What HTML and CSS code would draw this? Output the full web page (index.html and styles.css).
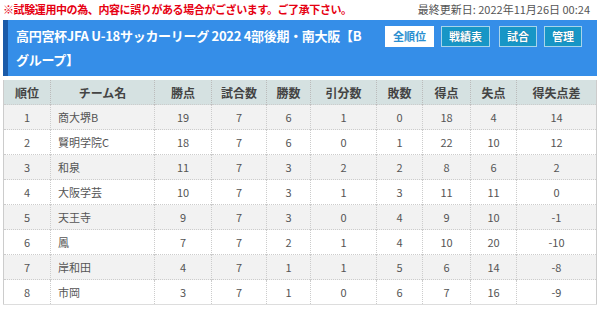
FILE: index.html
```html
<!DOCTYPE html>
<html lang="ja">
<head>
<meta charset="utf-8">
<link rel="stylesheet" href="styles.css">
</head>
<body>
<div class="topline">
  <span class="notice">※試験運用中の為、内容に誤りがある場合がございます。ご了承下さい。</span>
  <span class="updated">最終更新日: 2022年11月26日 00:24</span>
</div>
<div class="banner">
  <h1 class="title">高円宮杯JFA U-18サッカーリーグ 2022 4部後期・南大阪【Bグループ】</h1>
  <div class="btns">
    <span class="btn active">全順位</span>
    <span class="btn">戦績表</span>
    <span class="btn">試合</span>
    <span class="btn">管理</span>
  </div>
</div>
<table class="standings">
  <colgroup>
    <col class="c-rank"><col class="c-team"><col class="c-pts"><col class="c-gp"><col class="c-w"><col class="c-d"><col class="c-l"><col class="c-gf"><col class="c-ga"><col class="c-gd">
  </colgroup>
  <thead>
    <tr><th>順位</th><th>チーム名</th><th>勝点</th><th>試合数</th><th>勝数</th><th>引分数</th><th>敗数</th><th>得点</th><th>失点</th><th>得失点差</th></tr>
  </thead>
  <tbody>
    <tr><td>1</td><td class="team">商大堺B</td><td>19</td><td>7</td><td>6</td><td>1</td><td>0</td><td>18</td><td>4</td><td>14</td></tr>
    <tr><td>2</td><td class="team">賢明学院C</td><td>18</td><td>7</td><td>6</td><td>0</td><td>1</td><td>22</td><td>10</td><td>12</td></tr>
    <tr><td>3</td><td class="team">和泉</td><td>11</td><td>7</td><td>3</td><td>2</td><td>2</td><td>8</td><td>6</td><td>2</td></tr>
    <tr><td>4</td><td class="team">大阪学芸</td><td>10</td><td>7</td><td>3</td><td>1</td><td>3</td><td>11</td><td>11</td><td>0</td></tr>
    <tr><td>5</td><td class="team">天王寺</td><td>9</td><td>7</td><td>3</td><td>0</td><td>4</td><td>9</td><td>10</td><td>-1</td></tr>
    <tr><td>6</td><td class="team">鳳</td><td>7</td><td>7</td><td>2</td><td>1</td><td>4</td><td>10</td><td>20</td><td>-10</td></tr>
    <tr><td>7</td><td class="team">岸和田</td><td>4</td><td>7</td><td>1</td><td>1</td><td>5</td><td>6</td><td>14</td><td>-8</td></tr>
    <tr><td>8</td><td class="team">市岡</td><td>3</td><td>7</td><td>1</td><td>0</td><td>6</td><td>7</td><td>16</td><td>-9</td></tr>
  </tbody>
</table>
</body>
</html>
```
FILE: styles.css
```css
html, body { margin: 0; padding: 0; background: #fff; }
body {
  padding: 0 3px;
  font-family: "Noto Sans CJK JP", "Noto Sans", sans-serif;
  color: #555;
}
.topline {
  display: flex;
  justify-content: space-between;
  align-items: center;
  height: 18px;
  font-size: 11px;
  margin-bottom: 2px;
}
.notice { color: #e60012; font-weight: bold; letter-spacing: -0.4px; }
.updated { color: #555; padding-right: 7px; }
.banner {
  display: flex;
  align-items: flex-start;
  background: #358ee8;
  border-left: 5px solid #1a5aa8;
  padding: 4px 15px 4px 8px;
  height: 48px;
}
.title {
  margin: 0;
  flex: 1;
  font-size: 13px;
  letter-spacing: -0.3px;
  line-height: 24px;
  font-weight: bold;
  color: #fff;
  padding-right: 16px;
}
.btns { display: flex; gap: 7px; padding-top: 2px; }
.btns .btn:nth-child(3) { margin-left: 2px; }
.btn {
  display: inline-block;
  height: 19px;
  line-height: 19px;
  padding: 0 7px;
  font-size: 11px;
  font-weight: bold;
  color: #fff;
  background: #1796c6;
  border: 1px solid #a8d4ea;
  text-shadow: 0 0 1px #0a5a80;
}
.btn.active { background: #fff; color: #2a8fd0; border-color: #fff; text-shadow: none; }
.standings {
  margin-top: 4px;
  width: 594px;
  table-layout: fixed;
  border-collapse: collapse;
  font-size: 11px;
  border-left: 1px solid #ccc;
  border-right: 1px solid #ccc;
}
.c-rank { width: 47px; }
.c-team { width: 104px; }
.c-pts { width: 57px; }
.c-gp { width: 55px; }
.c-w { width: 44px; }
.c-d { width: 66px; }
.c-l { width: 46px; }
.c-gf { width: 48px; }
.c-ga { width: 46px; }
.c-gd { width: 80px; }
.standings th {
  height: 24px;
  padding: 0;
  background: #d5e1e1;
  color: #444;
  font-weight: bold;
  font-size: 12px;
  border-left: 1px dotted #bbb;
}
.standings td {
  height: 24px;
  padding: 0;
  text-align: center;
  border-top: 1px dotted #ccc;
  border-left: 1px dotted #ccc;
}
.standings th:first-child, .standings td:first-child { border-left: none; }
.standings tbody tr:nth-child(odd) td { background: #f2f2f2; }
.standings td.team { text-align: left; padding-left: 7px; }
.standings tbody tr:last-child td { border-bottom: 1px solid #ddd; }
```
